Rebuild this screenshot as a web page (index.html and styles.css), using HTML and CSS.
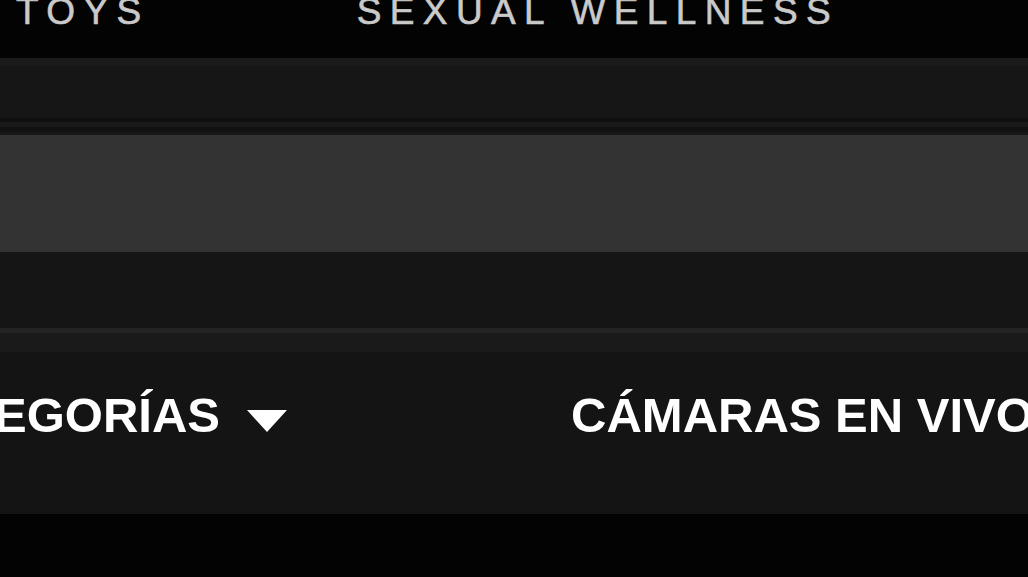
FILE: index.html
```html
<!DOCTYPE html>
<html lang="es">
<head>
    <meta charset="UTF-8">
    <meta name="viewport" content="width=device-width, initial-scale=1.0">
    <title>Menú</title>
    <link rel="stylesheet" href="styles.css">
</head>
<body>
<!-- enlaces superiores -->
<header class="top-links">
    <ul>
        <li><a href="#">TOYS</a></li>
        <li class="wellness"><a href="#">SEXUAL WELLNESS</a></li>
    </ul>
</header>

<!-- barra secundaria -->
<div class="subbar"></div>

<!-- zona de búsqueda -->
<div class="search-band"></div>

<div class="spacer"></div>
<div class="divider"></div>

<!-- menú principal -->
<nav class="main-nav">
    <ul>
        <li class="categories"><a href="#">CATEGORÍAS</a><span class="caret"></span></li>
        <li class="live"><a href="#">CÁMARAS EN VIVO</a></li>
    </ul>
</nav>

<footer class="bottom"></footer>
</body>
</html>
```

FILE: styles.css
```css
/* base */
html, body {
    margin: 0;
    padding: 0;
    background-color: #030303;
    overflow: hidden;
    font-family: "Liberation Sans", Arial, sans-serif;
}
ul {
    list-style: none;
    margin: 0;
    padding: 0;
}
a {
    text-decoration: none;
    color: inherit;
}

/* enlaces superiores */
.top-links {
    height: 58px;
    overflow: hidden;
    background-color: #030303;
}
.top-links ul {
    display: flex;
    margin-top: -7px;
    padding-left: 16px;
    white-space: nowrap;
}
.top-links li {
    font-size: 37px;
    line-height: 37px;
    letter-spacing: 8.4px;
    color: #cacaca;
    -webkit-text-stroke: 0.6px #cacaca;
}
.top-links .wellness {
    margin-left: 207px;
}

/* barra secundaria con borde sombreado */
.subbar {
    height: 77px;
    background: linear-gradient(to bottom,
        #1b1b1b 0, #1b1b1b 8px,
        #161616 8px, #161616 60px,
        #101010 60px, #101010 64px,
        #1a1a1a 64px, #1a1a1a 69px,
        #121212 69px, #121212 74px,
        #171717 74px);
}

.search-band {
    height: 117px;
    background-color: #333333;
}

.spacer {
    height: 76px;
    background-color: #151515;
}
.divider {
    height: 19px;
    border-top: 5px solid #232323;
    background-color: #1a1a1a;
}

/* menú principal */
.main-nav {
    height: 162px;
    box-sizing: border-box;
    padding-top: 39px;
    background-color: #141414;
    overflow: hidden;
}
.main-nav ul {
    display: flex;
    margin-left: -103px;
    white-space: nowrap;
}
.main-nav li {
    font-size: 49px;
    line-height: 49px;
    font-weight: bold;
    color: #fff;
}
.caret {
    display: inline-block;
    width: 0;
    height: 0;
    margin-left: 27px;
    border-left: 20px solid transparent;
    border-right: 20px solid transparent;
    border-top: 22px solid #fff;
}
.main-nav .live {
    margin-left: 284px;
}

.bottom {
    height: 63px;
    background-color: #030303;
}
```
